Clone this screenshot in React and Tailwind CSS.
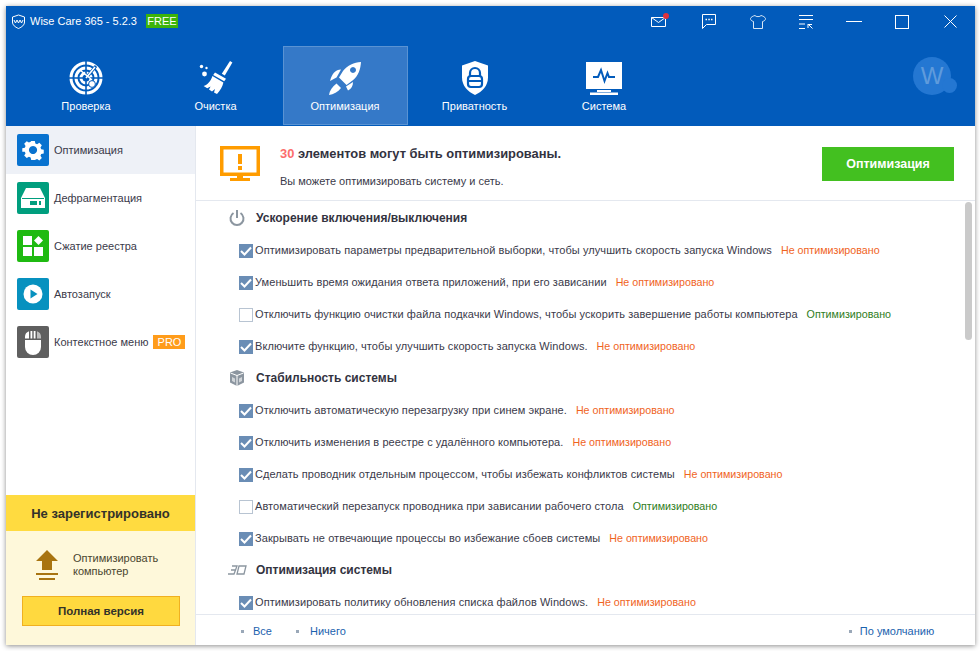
import { Fragment } from "react";

const sections = [
  {
    title: "Ускорение включения/выключения",
    icon: "power",
    items: [
      ["Оптимизировать параметры предварительной выборки, чтобы улучшить скорость запуска Windows", true],
      ["Уменьшить время ожидания ответа приложений, при его зависании", true],
      ["Отключить функцию очистки файла подкачки Windows, чтобы ускорить завершение работы компьютера", false],
      ["Включите функцию, чтобы улучшить скорость запуска Windows.", true],
    ],
  },
  {
    title: "Стабильность системы",
    icon: "box",
    items: [
      ["Отключить автоматическую перезагрузку при синем экране.", true],
      ["Отключить изменения в реестре с удалённого компьютера.", true],
      ["Сделать проводник отдельным процессом, чтобы избежать конфликтов системы", true],
      ["Автоматический перезапуск проводника при зависании рабочего стола", false],
      ["Закрывать не отвечающие процессы во избежание сбоев системы", true],
    ],
  },
  {
    title: "Оптимизация системы",
    icon: "3d",
    items: [["Оптимизировать политику обновления списка файлов Windows.", true]],
  },
];

function RadarIcon() {
  return (
    <svg width="34" height="34" viewBox="0 0 34 34">
      <g fill="none" stroke="#fff">
        <circle cx="17" cy="17" r="15" strokeWidth="3" />
        <circle cx="17" cy="17" r="10" strokeWidth="3" />
        <circle cx="17" cy="17" r="5" strokeWidth="3" />
      </g>
      <path d="M17 0v34M0 17h34" stroke="#025bbb" strokeWidth="1.6" />
      <path d="M17 17L27 5" stroke="#025bbb" strokeWidth="3" />
      <path d="M17 17L26 6M11 9l11 9" stroke="#fff" strokeWidth="1.6" />
      <circle cx="23" cy="23" r="3.4" fill="#fff" stroke="#025bbb" strokeWidth="1" />
    </svg>
  );
}

function BroomIcon() {
  return (
    <svg width="34" height="34" viewBox="0 0 34 34" fill="#fff">
      <path d="M31 0l2.400 1.600-7.600 13-3-1.800z" />
      <path d="M16 11.500l11 6.200-1.800 2.600-11-6.400z" />
      <path d="M13.400 15l11 6.400c-.8 4-3.200 8-6.400 11.600l-3-1.600 1-3.400-3 2.400-3-1.800 1.600-3-3.400 1.600-3.600-2.200c4-1.400 7-4.400 8.800-10z" />
      <circle cx="2.500" cy="5.500" r="1.700" />
      <circle cx="7.500" cy="7" r="1.200" />
      <circle cx="5.500" cy="13" r="2.400" />
    </svg>
  );
}

function RocketIcon() {
  return (
    <svg width="34" height="34" viewBox="0 0 34 34" fill="#fff">
      <path
        fillRule="evenodd"
        d="M33 1C26 1.500 19.500 4 15 10l-4 6.500 7.500 7.500 6-4.500C30.500 15 32.500 8 33 1zM25 6a3 3 0 1 1-.01 0z"
      />
      <path d="M13 8.500C7.500 8.500 4 12.500 2 20l6.500-3.500z" />
      <path d="M18 25.500l7-4.500c0 4-1.500 6.500-5 8.500z" />
      <path d="M8.500 22.500l4.500 4.500C10 31 5.500 33.500 1 34c.5-4.500 3.500-8.500 7.500-11.500z" />
    </svg>
  );
}

function ShieldIcon() {
  return (
    <svg width="28" height="34" viewBox="0 0 28 34">
      <path d="M14 0l13 4.500v12c0 8-5.500 14-13 17.500C6.500 30.500 1 24.500 1 16.500v-12z" fill="#fff" />
      <path d="M9 16v-4a5 5 0 0 1 10 0v4" fill="none" stroke="#025bbb" strokeWidth="2.200" />
      <rect x="7" y="15" width="14" height="11" rx="3" fill="none" stroke="#025bbb" strokeWidth="2.200" />
      <path d="M7 20h14" stroke="#025bbb" strokeWidth="2" />
    </svg>
  );
}

function MonitorIcon() {
  return (
    <svg width="36" height="33" viewBox="0 0 36 33">
      <path d="M0 0h36v27H0z" fill="#fff" />
      <path d="M11 28h14v2H11zM4 30.500h28V33H4z" fill="#fff" />
      <path d="M7 15h5l3-7 3.500 11 3-8 1.500 4h6" fill="none" stroke="#025bbb" strokeWidth="2" />
    </svg>
  );
}

const tabs = [
  ["Проверка", <RadarIcon />],
  ["Очистка", <BroomIcon />],
  ["Оптимизация", <RocketIcon />],
  ["Приватность", <ShieldIcon />],
  ["Система", <MonitorIcon />],
];

function TopBar() {
  return (
    <div className="bg-[#025bbb] h-[120px] relative text-white">
      <div className="h-[40px] flex items-center pl-[5px] pb-[9px]">
        <svg width="15" height="15" viewBox="0 0 15 15" fill="none" stroke="#fff" strokeWidth="1">
          <path d="M7.500 1l6 2v5c0 3-2.500 5-6 6.500C4 13 1.500 11 1.500 8V3z" />
          <path d="M3 6l1.500 3 1.500-3 1.500 3 1.500-3 1.500 3L12 6" />
        </svg>
        <span className="ml-[4px] text-[11px]">Wise Care 365 - 5.2.3</span>
        <span className="ml-[9px] -mt-[2px] bg-[#3cb40a] text-[11px] leading-[14px] w-[32px] text-center">FREE</span>
        <div className="ml-auto flex items-center">
          <span className="relative w-[15px] mr-[36px] flex">
            <svg width="15" height="10" viewBox="0 0 15 10" fill="none" stroke="#fff">
              <path d="M.5.500h14v9H.5zM.5.500l7 5 7-5" />
            </svg>
            <span className="absolute -top-[4px] -right-[3px] w-[6px] h-[6px] rounded-full bg-[#e0323c]" />
          </span>
          <svg className="mr-[34px]" width="14" height="15" viewBox="0 0 14 15" fill="none" stroke="#fff">
            <path d="M.5.500h13v10H4.500l-4 4z" />
            <path d="M3.500 5.500H5M6.300 5.500h1.500M9 5.500h1.500" strokeWidth="1.500" />
          </svg>
          <svg className="mr-[33px]" width="16" height="14" viewBox="0 0 16 14" fill="#025bbb" stroke="#d8e6f5">
            <path d="M5 .5C3 1 1 2 .5 3.500c0 1.500 1 2.500 3 3v7h9v-7c2-.5 3-1.500 3-3C15 2 13 1 11 .5c-.5 1.500-5.500 1.500-6 0z" />
          </svg>
          <svg className="mr-[33px]" width="14" height="14" viewBox="0 0 14 14" fill="none" stroke="#fff">
            <path d="M0 .5h14M0 4.500h14M0 9h6M0 13.500h6M9 9.500h4M9 9v4M9.500 9.500l4 4" />
          </svg>
          <span className="w-[16px] h-[1px] bg-white mr-[33px]" />
          <span className="w-[14px] h-[14px] border border-white mr-[35px]" />
          <svg className="mr-[18px]" width="13" height="13" viewBox="0 0 13 13" stroke="#fff">
            <path d="M.5.500l12 12M12.500.500l-12 12" />
          </svg>
        </div>
      </div>
      <div className="flex gap-[4.5px] pl-[17.5px]">
        {tabs.map(([label, icon]) => (
          <div
            key={label}
            className={
              "w-[125px] h-[79px] flex flex-col items-center pt-[14px] text-[11px] border " +
              (label === "Оптимизация" ? "bg-[#3579c8] border-[#5a93d3]" : "border-transparent")
            }
          >
            <div className="h-[34px] flex items-center">{icon}</div>
            <span className="mt-[3px] leading-[16px]">{label}</span>
          </div>
        ))}
      </div>
      <div className="absolute left-[907px] top-[51px] w-[38px] h-[38px] rounded-full bg-[#2477d2] flex items-center justify-center text-[#5f9bdc] text-[24px]">
        W
      </div>
      <div className="absolute left-[936px] top-[72px] w-[15px] h-[15px] rounded-full bg-[#2477d2]" />
    </div>
  );
}

function SideIcon({ type }) {
  if (type === "gear")
    return (
      <svg width="22" height="22" viewBox="0 0 22 22">
        <path
          fill="#fff"
          fillRule="evenodd"
          d="M9 1h4l.6 2.800 1.900.8 2.400-1.500 2.800 2.800-1.500 2.400.8 1.900 2.800.6v4l-2.800.6-.8 1.900 1.500 2.400-2.800 2.800-2.400-1.500-1.900.8L13 22H9l-.6-2.800-1.900-.8-2.400 1.500-2.800-2.800 1.500-2.400-.8-1.900L-.8 13V9l2.800-.6.8-1.900-1.500-2.400 2.800-2.800 2.400 1.500 1.900-.8zM11 6.500a4.500 4.500 0 1 0 .01 0z"
          transform="translate(1 1) scale(.91)"
        />
      </svg>
    );
  if (type === "disk")
    return (
      <svg width="24" height="20" viewBox="0 0 24 20">
        <path d="M5 0h14l5 10H0z" fill="#fff" />
        <path d="M0 10h24v10H0z" fill="#fff" />
        <path d="M1 10.500h22" stroke="#009e7e" />
        <path d="M9 13h7v4H9zM18 13h2v4h-2z" fill="#009e7e" />
      </svg>
    );
  if (type === "grid")
    return (
      <svg width="20" height="20" viewBox="0 0 20 20" fill="#fff">
        <rect x="0" y="0" width="9" height="9" />
        <rect x="0" y="11" width="9" height="9" />
        <rect x="11" y="11" width="9" height="9" />
        <path d="M15.500 0l4.500 4.500-4.500 4.500L11 4.500z" />
      </svg>
    );
  if (type === "play")
    return (
      <svg width="20" height="20" viewBox="0 0 20 20">
        <circle cx="10" cy="10" r="9.500" fill="#fff" />
        <path d="M7.500 5.500l7 4.500-7 4.500z" fill="#0791bf" />
      </svg>
    );
  return (
    <svg width="16" height="26" viewBox="0 0 16 26">
      <path d="M0 11h16v7a8 8 0 0 1-16 0z" fill="#fff" />
      <path d="M0 9.500V8a6 6 0 0 1 4-5.700v7.200zM5.500 2h1.800v7.500H5.500zM8.700 2h1.800v7.500H8.700z" fill="#fff" />
      <path d="M12 2.300A6 6 0 0 1 16 8v1.500h-4z" fill="#bdbdbd" />
    </svg>
  );
}

const sideItems = [
  ["Оптимизация", "gear", "bg-[#0872cf]"],
  ["Дефрагментация", "disk", "bg-[#009e7e]"],
  ["Сжатие реестра", "grid", "bg-[#1fba11]"],
  ["Автозапуск", "play", "bg-[#0791bf]"],
  ["Контекстное меню", "mouse", "bg-[#5f5f5f]"],
];

function Sidebar() {
  return (
    <div className="w-[190px] flex flex-col border-r border-[#e4e8ef]">
      <div className="flex-1">
        {sideItems.map(([label, icon, color], i) => (
          <div key={label} className={"h-[48px] flex items-center pl-[11px] " + (i === 0 ? "bg-[#eef1f7]" : "")}>
            <div className={"w-[32px] h-[32px] rounded-[2px] flex items-center justify-center " + color}>
              <SideIcon type={icon} />
            </div>
            <span className="ml-[5px] pt-[1px] text-[11px] text-[#3a3a4a]">{label}</span>
            {icon === "mouse" && (
              <span className="ml-[5px] bg-[#ff9c1a] text-white text-[11px] leading-[14px] w-[32px] text-center">PRO</span>
            )}
          </div>
        ))}
      </div>
      <div className="h-[36px] bg-[#ffdb40] flex items-center justify-center pt-[1px] text-[13px] font-bold text-[#33322a]">
        Не зарегистрировано
      </div>
      <div className="h-[114px] bg-[#fef8da] pl-[16px] pr-[15px] pt-[19px]">
        <div className="flex items-center">
          <svg className="ml-[14px]" width="22" height="30" viewBox="0 0 22 30" fill="#a87410">
            <path d="M11 0l11 11h-6v9H6v-9H0zM0 23h22v2H0zM3 28h16v2H3z" />
          </svg>
          <span className="ml-[15px] text-[11px] leading-[13px] text-[#4a4630]">
            Оптимизировать
            <br />
            компьютер
          </span>
        </div>
        <button className="mt-[16px] w-[158px] h-[30px] pt-[1px] bg-[#ffd93f] border border-[#f0b020] text-[11.500px] font-bold text-[#33322a]">
          Полная версия
        </button>
      </div>
    </div>
  );
}

function SectionIcon({ type }) {
  if (type === "power")
    return (
      <svg width="16" height="16" viewBox="0 0 16 16" fill="none" stroke="#8c96a0" strokeWidth="2">
        <path d="M8 0v8" />
        <path d="M4.500 3a6.500 6.500 0 1 0 7 0" />
      </svg>
    );
  if (type === "box")
    return (
      <svg width="16" height="16" viewBox="0 0 16 16">
        <path d="M8 0l7 2.500v10L8 16l-7-3.500v-10z" fill="#8c96a0" />
        <path d="M1.500 3L8 5.500 14.500 3M8 5.500V16" stroke="#fff" fill="none" />
        <path d="M3 7v4l3 1.500v-4zM13 7v4l-3 1.500v-4z" fill="#fff" opacity=".6" />
      </svg>
    );
  return (
    <svg width="20" height="10" viewBox="0 0 20 10" fill="none" stroke="#8c96a0" strokeWidth="1.300">
      <path d="M5 1h5L8.500 5H4M8.500 5L7 9H1M12 1h7l-2 8h-7z" />
    </svg>
  );
}

function Checkbox({ checked }) {
  if (!checked) return <span className="w-[14px] h-[14px] border border-[#b8c4d2] bg-white shrink-0" />;
  return (
    <span className="w-[14px] h-[14px] bg-[#6a8db5] shrink-0 flex items-center justify-center">
      <svg width="12" height="10" viewBox="0 0 12 10" fill="none" stroke="#fff" strokeWidth="2">
        <path d="M1 5l3.500 3.500L11 1.500" />
      </svg>
    </span>
  );
}

function OptList() {
  return (
    <div className="h-[413px] overflow-hidden relative pt-[1px]">
      {sections.map((s) => (
        <Fragment key={s.title}>
          <div className="h-[32px] flex items-center">
            <span className="w-[60px] flex justify-center pl-[22px]">
              <SectionIcon type={s.icon} />
            </span>
            <span className="text-[12px] font-bold text-[#33333f]">{s.title}</span>
          </div>
          {s.items.map(([text, checked]) => (
            <div key={text} className="h-[32px] flex items-center pt-[1px] pl-[43px] text-[11px] text-[#3a3a4a] whitespace-nowrap">
              <Checkbox checked={checked} />
              <span className="ml-[2px] tracking-[0.07px]">{text}</span>
              <span className={"ml-[9px] text-[10.700px] " + (checked ? "text-[#f0641e]" : "text-[#2f7d22]")}>
                {checked ? "Не оптимизировано" : "Оптимизировано"}
              </span>
            </div>
          ))}
        </Fragment>
      ))}
      <div className="absolute left-[769px] top-[1px] w-[7px] h-[138px] rounded-[4px] bg-[#cacaca]" />
    </div>
  );
}

export default function App() {
  return (
    <div className="w-[980px] h-[651px] bg-white pt-[6px] pl-[6px] font-['Liberation_Sans',sans-serif]">
      <div className="w-[969px] h-[639px] bg-white flex flex-col shadow-[0_1px_5px_rgba(0,0,0,0.45)]">
        <TopBar />
        <div className="flex flex-1">
          <Sidebar />
          <div className="flex-1 flex flex-col">
            <div className="h-[75px] flex items-start border-b border-[#e4e8ef] pl-[24px] pt-[20px]">
              <svg width="40" height="35" viewBox="0 0 40 35">
                <path d="M0 0h40v30H0z" fill="#ff9c00" />
                <path d="M3.500 3.500h33v23h-33z" fill="#fff" />
                <path d="M18 8h4v10h-4zM18 20h4v4h-4zM17 30h6v3h-6zM10 32h20v3H10z" fill="#ff9c00" />
              </svg>
              <div className="ml-[20px] w-[542px]">
                <div className="text-[12.900px] font-bold text-[#33333f] leading-[16px]">
                  <span className="text-[#fc6d6d]">30</span> элементов могут быть оптимизированы.
                </div>
                <div className="mt-[11px] text-[11px] text-[#3a3a4a] leading-[16px]">Вы можете оптимизировать систему и сеть.</div>
              </div>
              <button className="w-[132px] h-[34px] mt-[1px] bg-[#43c020] text-white text-[12.500px] font-bold">Оптимизация</button>
            </div>
            <OptList />
            <div className="flex-1 border-t border-[#e4e8ef] flex items-center pt-[3px] text-[11px] text-[#1b62ae] pl-[45px]">
              <span className="w-[3px] h-[3px] bg-[#9aa8b8]" />
              <span className="ml-[9px]">Все</span>
              <span className="ml-[24px] w-[3px] h-[3px] bg-[#9aa8b8]" />
              <span className="ml-[11px]">Ничего</span>
              <span className="ml-[503px] w-[3px] h-[3px] bg-[#9aa8b8]" />
              <span className="ml-[8px]">По умолчанию</span>
            </div>
          </div>
        </div>
      </div>
    </div>
  );
}
